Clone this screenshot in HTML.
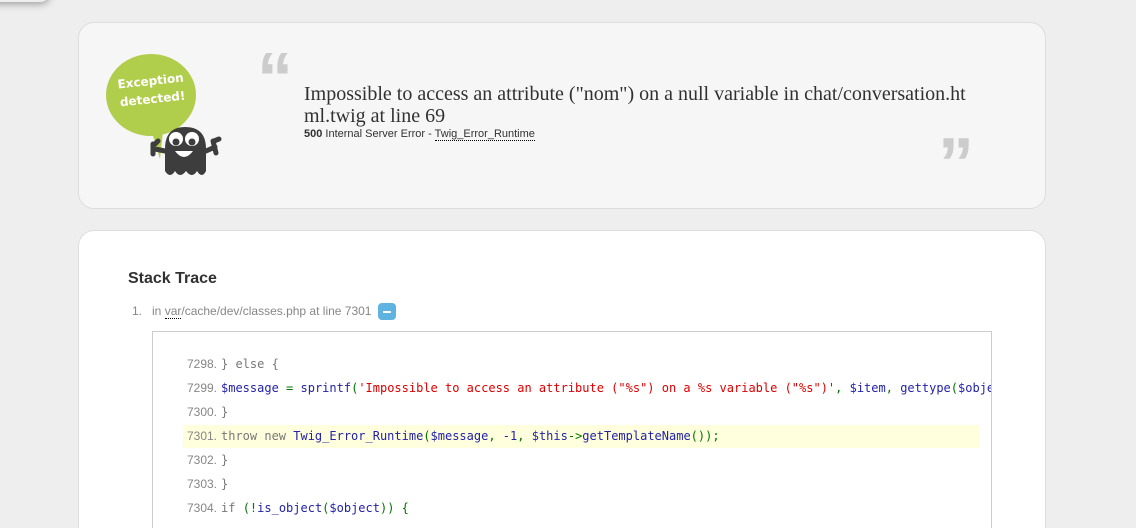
<!DOCTYPE html>
<html><head><meta charset="utf-8"><style>
html,body{margin:0;padding:0;background:#eee;width:1136px;height:528px;overflow:hidden;font-family:"Liberation Sans",sans-serif;}
.shadow{position:absolute;left:-20px;top:-10px;width:70px;height:12px;box-shadow:0 2px 8px rgba(0,0,0,.35);background:#eee;border-radius:0 0 10px 0}
.hdr{position:absolute;left:78px;top:22px;width:966px;height:185px;background:#f6f6f6;border:1px solid #ddd;border-radius:16px;}
.msg{position:absolute;left:225px;top:60px;width:670px;font-family:"Liberation Serif",serif;font-size:20px;line-height:22px;color:#313131}
.sub{position:absolute;left:225px;top:105px;font-size:11px;color:#313131}
.sub abbr{border-bottom:1px dotted #000;text-decoration:none}
.q{position:absolute;font-family:"Liberation Sans",sans-serif;font-size:72px;font-weight:bold;color:#ccc;line-height:72px}
.box{position:absolute;left:78px;top:230px;width:966px;height:297px;background:#fff;border:1px solid #ddd;border-bottom:none;border-radius:16px 16px 0 0;overflow:hidden}
h2{position:absolute;left:49px;top:39px;margin:0;font-size:16px;font-weight:bold;color:#313131}
.li{position:absolute;left:53px;top:73px;font-size:12px;color:#868686}
.li abbr{border-bottom:1px dotted #000}
.tog{position:absolute;left:299px;top:72px;width:18px;height:17px;background:#5fb3e0;border-radius:4px}
.tog:after{content:"";position:absolute;left:5px;top:8px;width:8px;height:2px;background:#fff}
.code{position:absolute;left:73px;top:100px;width:838px;height:196px;border:1px solid #ccc;border-bottom:none;overflow:hidden;background:#fff}
.ln{position:absolute;left:30px;height:23px;width:797px;font-family:"DejaVu Sans Mono",monospace;font-size:12px;line-height:23px;white-space:pre;color:#777}
.ln b{font-weight:normal;font-family:"Liberation Sans",sans-serif;display:inline-block;width:34px;text-align:right;margin-right:4px;color:#868686}
.hl{background:#ffd}
.v{color:#22a}.s{color:#d00}.g{color:#070}
</style></head><body>
<div class="shadow"></div>
<div class="hdr">
<svg style="position:absolute;left:24px;top:26px" width="120" height="130" viewBox="0 0 120 130">
<ellipse cx="48" cy="46" rx="45" ry="41" fill="#b0cd4c"/>
<path d="M48 80 L60 82 L57 110 Z" fill="#b0cd4c"/>
<text x="48" y="36" font-family="DejaVu Sans" font-weight="bold" font-size="12" fill="#fff" text-anchor="middle" transform="rotate(-6 48 36)">Exception</text>
<text x="50" y="54" font-family="DejaVu Sans" font-weight="bold" font-size="12" fill="#fff" text-anchor="middle" transform="rotate(-6 50 54)">detected!</text>
<path d="M62 100 Q62 78 82 78 Q103 78 103 100 L103 122 Q99 130 94 122 Q89 130 83 122 Q77 130 72 122 Q67 130 62 122 Z" fill="#3d3d3d"/>
<circle cx="73" cy="90" r="7" fill="#fff"/><circle cx="89" cy="90" r="7" fill="#fff"/>
<circle cx="73" cy="93" r="3.5" fill="#3d3d3d"/><circle cx="89" cy="93" r="3.5" fill="#3d3d3d"/>
<path d="M72 102 Q81 114 90 102 Z" fill="#fff"/>
<path d="M62 102 L52 100 M50 95 L50 105 M52 95 L55 92 M103 102 L112 98 M110 92 L113 104 M111 92 L116 90" stroke="#3d3d3d" stroke-width="5" stroke-linecap="round"/>
</svg>
<div class="q" style="left:178px;top:20px">“</div>
<div class="q" style="left:859px;top:105px">”</div>
<div class="msg">Impossible to access an attribute ("nom") on a null variable in chat/conversation.ht ml.twig at line 69</div>
<div class="sub"><b>500</b> Internal Server Error - <abbr>Twig_Error_Runtime</abbr></div>
</div>
<div class="box">
<h2>Stack Trace</h2>
<div class="li">1.&nbsp;&nbsp;&nbsp;in <abbr>var</abbr>/cache/dev/classes.php at line 7301</div>
<div class="tog"></div>
<div class="code">
<div class="ln" style="top:21px"><b>7298.</b>} else {</div>
<div class="ln" style="top:45px"><b>7299.</b><span class="v">$message</span> <span class="g">=</span> <span class="v">sprintf</span><span class="g">(</span><span class="s">'Impossible to access an attribute ("%s") on a %s variable ("%s")'</span><span class="g">,</span> <span class="v">$item</span><span class="g">,</span> <span class="v">gettype</span><span class="g">(</span><span class="v">$object</span></div>
<div class="ln" style="top:69px"><b>7300.</b>}</div>
<div class="ln hl" style="top:93px"><b>7301.</b>throw new <span class="v">Twig_Error_Runtime</span><span class="g">(</span><span class="v">$message</span><span class="g">,</span> <span class="v">-1</span><span class="g">,</span> <span class="v">$this</span><span class="g">-&gt;</span><span class="v">getTemplateName</span><span class="g">());</span></div>
<div class="ln" style="top:117px"><b>7302.</b>}</div>
<div class="ln" style="top:141px"><b>7303.</b>}</div>
<div class="ln" style="top:165px"><b>7304.</b>if <span class="g">(!</span><span class="v">is_object</span><span class="g">(</span><span class="v">$object</span><span class="g">)) {</span></div>
</div>
</div>
</body></html>
